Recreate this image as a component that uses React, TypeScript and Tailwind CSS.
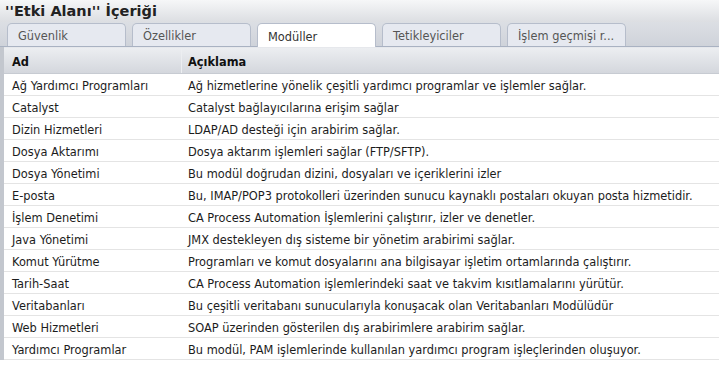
const tabs = ["Güvenlik", "Özellikler", "Modüller", "Tetikleyiciler", "İşlem geçmişi r..."];

const rows: [string, string][] = [
  ["Ağ Yardımcı Programları", "Ağ hizmetlerine yönelik çeşitli yardımcı programlar ve işlemler sağlar."],
  ["Catalyst", "Catalyst bağlayıcılarına erişim sağlar"],
  ["Dizin Hizmetleri", "LDAP/AD desteği için arabirim sağlar."],
  ["Dosya Aktarımı", "Dosya aktarım işlemleri sağlar (FTP/SFTP)."],
  ["Dosya Yönetimi", "Bu modül doğrudan dizini, dosyaları ve içeriklerini izler"],
  ["E-posta", "Bu, IMAP/POP3 protokolleri üzerinden sunucu kaynaklı postaları okuyan posta hizmetidir."],
  ["İşlem Denetimi", "CA Process Automation İşlemlerini çalıştırır, izler ve denetler."],
  ["Java Yönetimi", "JMX destekleyen dış sisteme bir yönetim arabirimi sağlar."],
  ["Komut Yürütme", "Programları ve komut dosyalarını ana bilgisayar işletim ortamlarında çalıştırır."],
  ["Tarih-Saat", "CA Process Automation işlemlerindeki saat ve takvim kısıtlamalarını yürütür."],
  ["Veritabanları", "Bu çeşitli veritabanı sunucularıyla konuşacak olan Veritabanları Modülüdür"],
  ["Web Hizmetleri", "SOAP üzerinden gösterilen dış arabirimlere arabirim sağlar."],
  ["Yardımcı Programlar", "Bu modül, PAM işlemlerinde kullanılan yardımcı program işleçlerinden oluşuyor."],
];

export default function App() {
  return (
    <div className="w-[719px] h-[365px] overflow-hidden bg-white font-['DejaVu_Sans',sans-serif] text-[11.4px] text-[#1c1c1c]">
      {/* title */}
      <div className="h-[22px] flex items-center px-[5px] pt-[2px] bg-gradient-to-b from-[#f6f7f8] to-[#dcdee2]">
        <span className="font-bold text-[14.5px] text-[#222]">''Etki Alanı'' İçeriği</span>
      </div>

      {/* tabs */}
      <div className="h-[25px] flex items-end gap-[6px] pl-[7px] bg-gradient-to-b from-[#dcdfe4] to-[#cfd3da] border-b border-[#a9b2c2]">
        {tabs.map((t, i) => (
          <div
            key={t}
            className={
              i === 2
                ? "w-[119px] h-[24px] -mb-px flex items-center pl-[10px] pt-[4px] rounded-t-[5px] border border-b-0 border-[#b6bdcb] bg-white text-[#333]"
                : "w-[119px] h-[23px] flex items-center pl-[10px] pt-[4px] rounded-t-[5px] border border-b-0 border-[#b6bdcb] bg-[#e6e9f0] text-[#555]"
            }
          >
            {t}
          </div>
        ))}
      </div>

      <div className="flex">
        <div className="w-[4px] bg-[#c3c7ce] shrink-0 self-stretch" />
        <div className="flex-1">
          {/* header */}
          <div className="h-[27px] flex border-t border-[#e6e8ec] bg-gradient-to-b from-[#eceef1] to-[#d4d7dd] border-b border-b-[#c7cbd2] font-bold text-[#111]">
            <div className="w-[177px] pl-[8px] pt-[5px] flex items-center">Ad</div>
            <div className="w-px bg-[#eceef1]" />
            <div className="pl-[6px] pt-[5px] flex items-center">Açıklama</div>
          </div>
          {rows.map(([a, b]) => (
            <div key={a} className="h-[22px] flex items-center pt-[4px] border-b border-[#e4e4e4]">
              <div className="w-[178px] pl-[8px] whitespace-nowrap">{a}</div>
              <div className="pl-[6px] whitespace-nowrap">{b}</div>
            </div>
          ))}
        </div>
      </div>
    </div>
  );
}
